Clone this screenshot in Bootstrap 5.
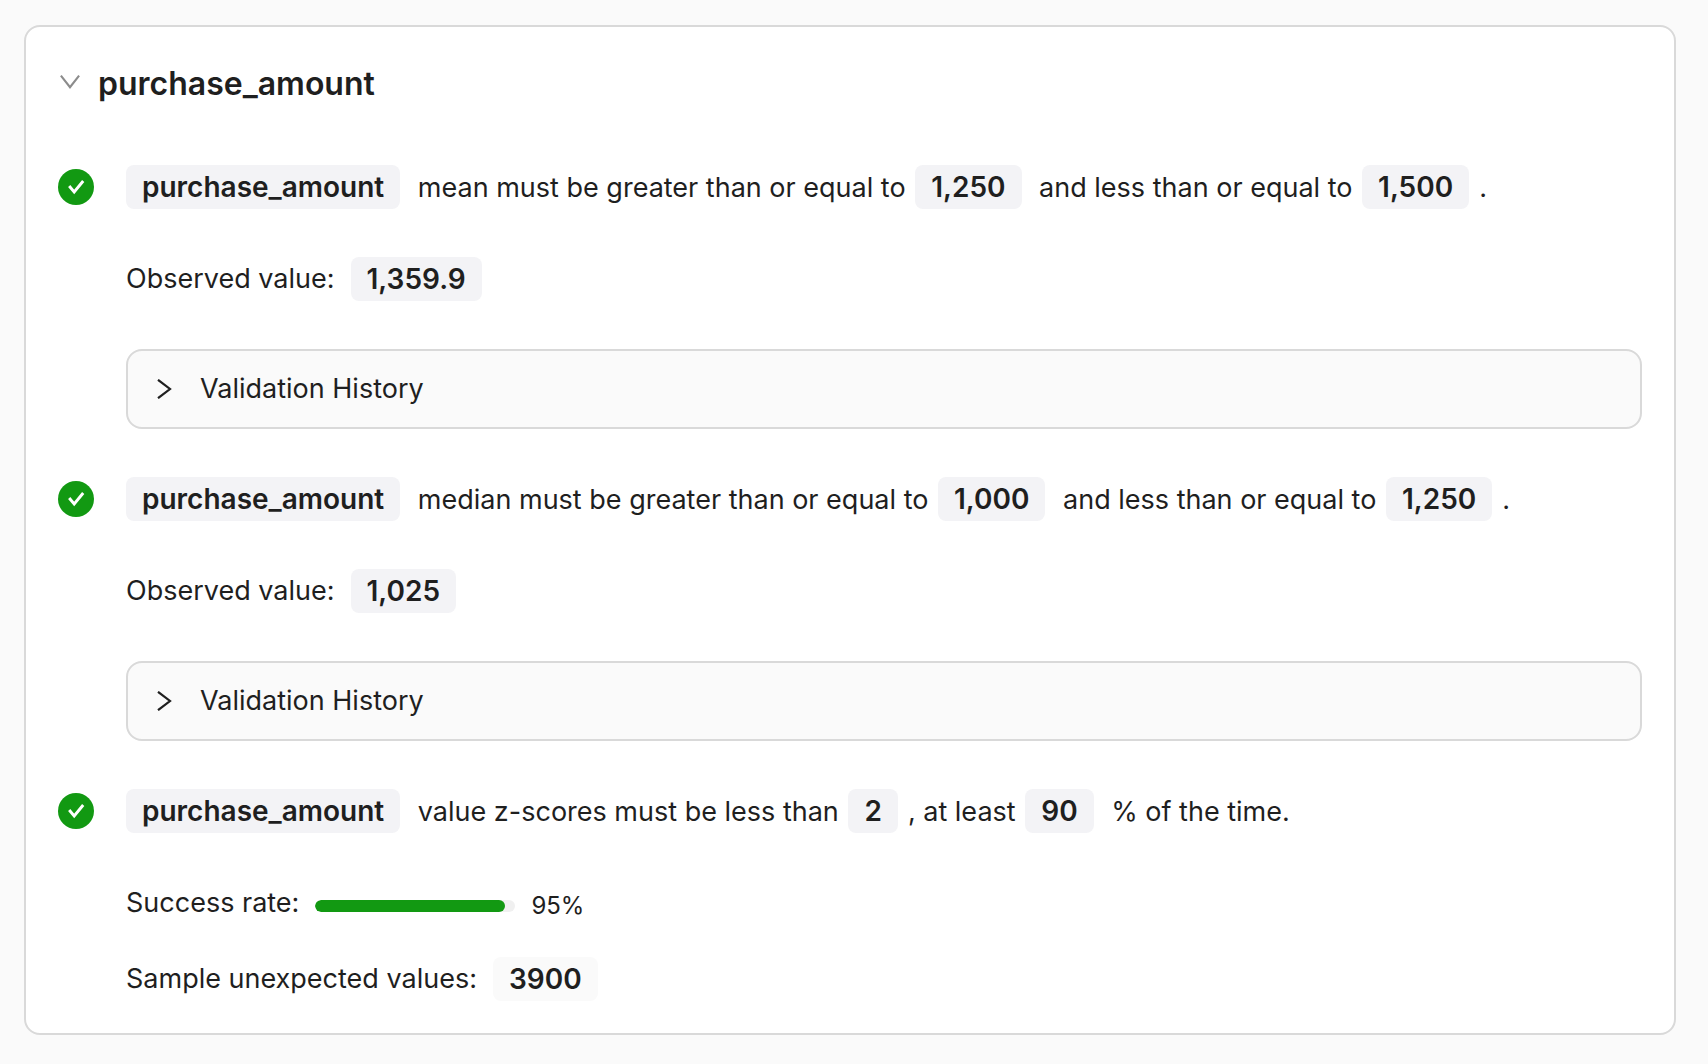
<!DOCTYPE html>
<html lang="en">
<head>
<meta charset="utf-8">
<meta name="viewport" content="width=device-width, initial-scale=1">
<title>purchase_amount</title>
<link href="https://cdn.jsdelivr.net/npm/bootstrap@5.3.0/dist/css/bootstrap.min.css" rel="stylesheet">
<style>
  body { background: #fafafa; color: #1f1f1f; font-family: Inter, "Liberation Sans", sans-serif; font-size: 27px; line-height: 40px; }
  .column-panel { margin: 25px 32px 28px 24px; background: #fff; border: 2px solid #d9d9d9; border-radius: 16px; padding: 32px; }
  .panel-heading { padding-left: 2px; }
  .panel-toggle { gap: 18px; font-size: 32px; line-height: 50px; color: inherit; }
  .panel-toggle svg { width: 20px; height: 20px; color: #8c8c8c; }
  .checks { margin-top: 56px; gap: 48px; }
  .check-item { gap: 32px; }
  .status-icon { width: 36px; height: 36px; margin-top: 4px; }
  .check-body { gap: 48px; min-width: 0; }
  .pill { display: inline-block; padding: 0 16px; margin: 0 10px 0 2px; border-radius: 8px; background: #f3f3f6; font-size: 28px; line-height: 44px; font-weight: 600; }
  .pill:first-child { margin-left: 0; }
  .pill-plain { background: #fafafa; }
  .observed { gap: 16px; min-height: 44px; }
  .history-toggle { gap: 26px; height: 80px; padding: 0 26px; border: 2px solid #d9d9d9; border-radius: 16px; background: #fafafa; color: inherit; }
  .history-toggle svg { width: 20px; height: 20px; }
  .results { gap: 32px; }
  .rate { gap: 16px; padding-top: 6px; }
  .rate-bar { width: 200px; height: 12px; border-radius: 6px; background: #f0f0f0; }
  .rate-bar .progress-bar { background: #129912; border-radius: 6px; }
  .rate-value { font-size: 24px; line-height: 36px; }
</style>
<script src="https://cdn.jsdelivr.net/npm/bootstrap@5.3.0/dist/js/bootstrap.bundle.min.js"></script>
</head>
<body>
<svg class="d-none" aria-hidden="true">
  <symbol id="ok" viewBox="0 0 36 36"><circle cx="18" cy="18" r="18" fill="#129912"/><path d="M11.2 17l5 6 9-11" fill="none" stroke="#fff" stroke-width="2.9"/></symbol>
  <symbol id="down" viewBox="0 0 20 20"><path d="M.9 1.6l9.1 11.6 9.1-11.6" fill="none" stroke="currentColor" stroke-width="2.1"/></symbol>
  <symbol id="right" viewBox="0 0 20 20"><path d="M4 .8L16 10 4 19.2" fill="none" stroke="currentColor" stroke-width="2.2"/></symbol>
</svg>
<main class="column-panel">
  <h1 class="panel-heading m-0 d-flex"><button class="panel-toggle btn border-0 p-0 d-flex align-items-center fw-semibold" type="button" data-bs-toggle="collapse" data-bs-target="#checks" aria-expanded="true" aria-controls="checks"><svg aria-hidden="true"><use href="#down"/></svg>purchase_amount</button></h1>
  <div class="collapse show" id="checks">
    <div class="checks d-flex flex-column">
      <section class="check-item d-flex">
        <svg class="status-icon flex-shrink-0" role="img" aria-label="Passed"><use href="#ok"/></svg>
        <div class="check-body d-flex flex-column flex-grow-1">
          <div><span class="pill">purchase_amount</span> mean must be greater than or equal to <span class="pill">1,250</span> and less than or equal to <span class="pill">1,500</span>.</div>
          <div class="observed d-flex align-items-center">Observed value: <span class="pill">1,359.9</span></div>
          <button class="history-toggle d-flex align-items-center w-100" type="button"><svg aria-hidden="true"><use href="#right"/></svg>Validation History</button>
        </div>
      </section>
      <section class="check-item d-flex">
        <svg class="status-icon flex-shrink-0" role="img" aria-label="Passed"><use href="#ok"/></svg>
        <div class="check-body d-flex flex-column flex-grow-1">
          <div><span class="pill">purchase_amount</span> median must be greater than or equal to <span class="pill">1,000</span> and less than or equal to <span class="pill">1,250</span>.</div>
          <div class="observed d-flex align-items-center">Observed value: <span class="pill">1,025</span></div>
          <button class="history-toggle d-flex align-items-center w-100" type="button"><svg aria-hidden="true"><use href="#right"/></svg>Validation History</button>
        </div>
      </section>
      <section class="check-item d-flex">
        <svg class="status-icon flex-shrink-0" role="img" aria-label="Passed"><use href="#ok"/></svg>
        <div class="check-body d-flex flex-column flex-grow-1">
          <div><span class="pill">purchase_amount</span> value z-scores must be less than <span class="pill">2</span>, at least <span class="pill">90</span> % of the time.</div>
          <div class="results d-flex flex-column">
            <div class="observed d-flex align-items-center">Success rate:
              <div class="rate d-flex align-items-center">
                <div class="progress rate-bar" role="progressbar" aria-label="Success rate" aria-valuenow="95" aria-valuemin="0" aria-valuemax="100"><div class="progress-bar" style="width: 95%"></div></div>
                <span class="rate-value">95%</span>
              </div>
            </div>
            <div class="observed d-flex align-items-center">Sample unexpected values: <span class="pill pill-plain">3900</span></div>
          </div>
        </div>
      </section>
    </div>
  </div>
</main>
</body>
</html>
